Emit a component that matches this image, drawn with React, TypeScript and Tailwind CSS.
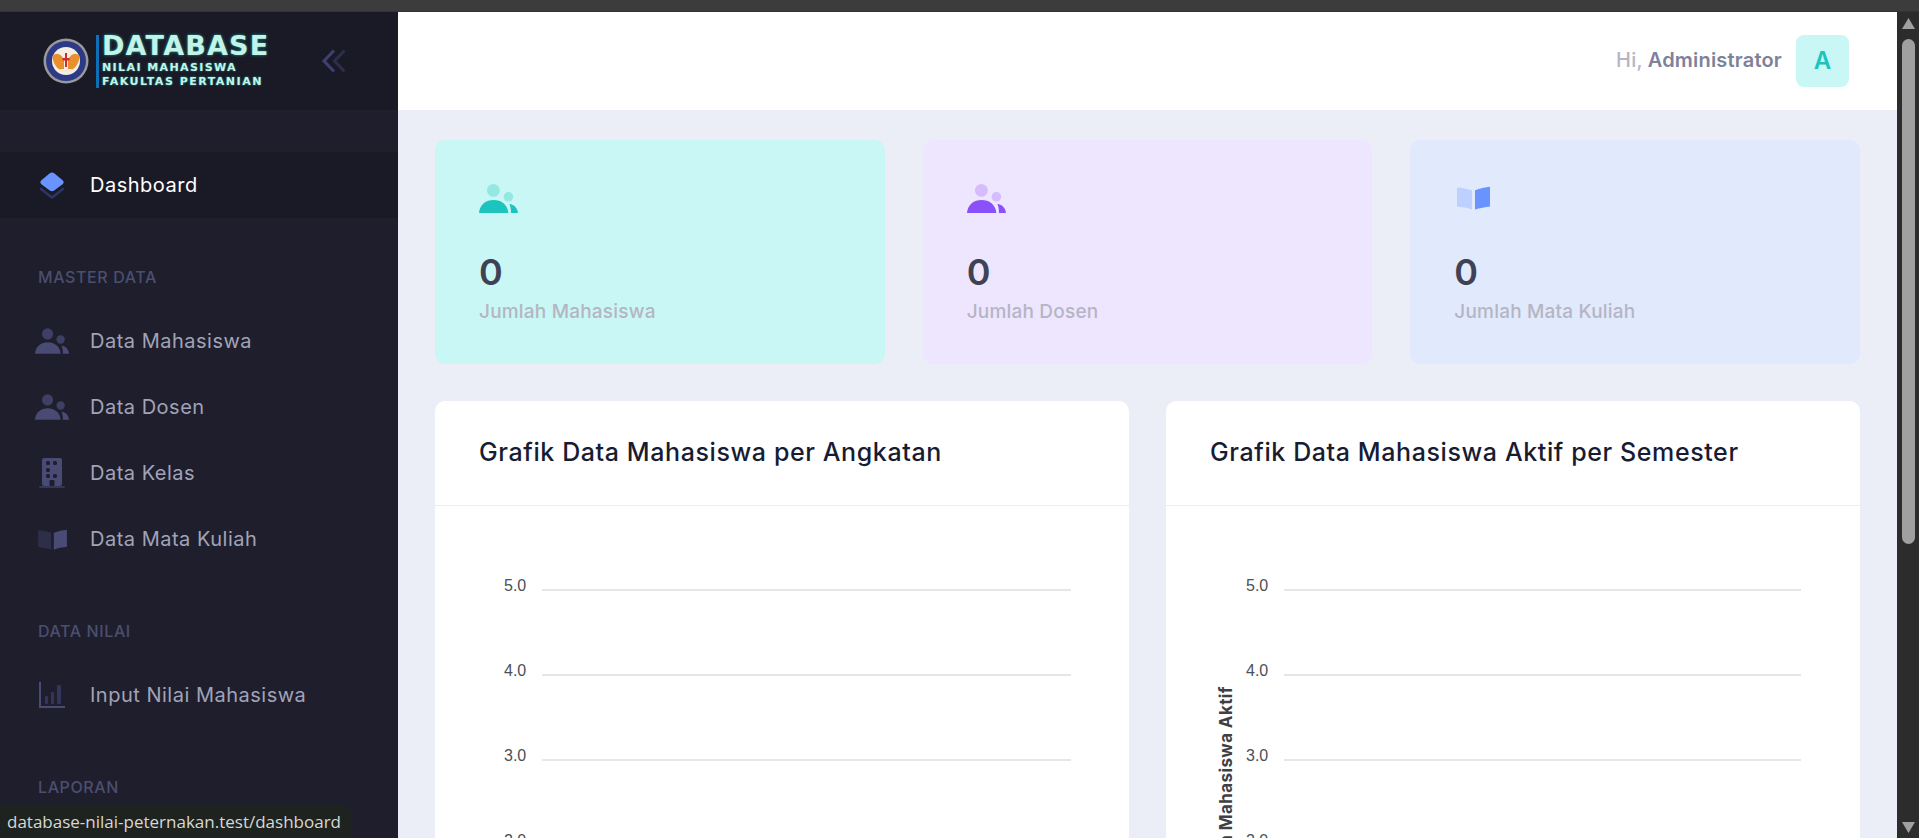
const navIcon = "h-[30px] w-[34px] shrink-0";

function PeopleIcon({ head, body, className }: { head: string; body: string; className: string }) {
  return (
    <svg viewBox="0 0 39 29" className={className}>
      <circle cx="14.4" cy="6.4" r="6.4" fill={head} />
      <circle cx="29.4" cy="12.8" r="4.8" fill={head} />
      <path d="M0 29C0.6 20.5 7 16 14.6 16C22.2 16 28.6 20.5 29.4 29Z" fill={body} />
      <path d="M30.4 20C35.4 20.6 38.6 24.2 39 29H32C32 25.6 31.6 22.6 30.4 20Z" fill={body} />
    </svg>
  );
}

function BookIcon({ left, right, className }: { left: string; right: string; className: string }) {
  return (
    <svg viewBox="0 0 33 24" className={className}>
      <path d="M0 1.5C5 1.8 10 2.8 15 4.2V23.5C10 22 5 21 0 20.6Z" fill={left} />
      <path d="M18 4.2C23 2.4 28 1.2 33 0.8V20.4C28 20.8 23 22 18 23.6Z" fill={right} />
    </svg>
  );
}

function BuildingIcon() {
  return (
    <svg viewBox="0 0 26 30" className={navIcon}>
      <rect x="3" y="0" width="20" height="28" rx="2" fill="#494b74" />
      <rect x="0" y="28" width="26" height="2" rx="1" fill="#33355a" />
      <g fill="#1e1e2d">
        <rect x="7" y="3" width="4" height="4" rx="1.5" />
        <rect x="14" y="3" width="4" height="4" rx="1.5" />
        <rect x="7" y="10" width="4" height="4" rx="1.5" />
        <rect x="7" y="16" width="4" height="4" rx="1.5" />
        <rect x="14" y="16" width="4" height="4" rx="1.5" />
        <rect x="10.5" y="22" width="5" height="6" rx="1" />
      </g>
    </svg>
  );
}

function ChartIcon() {
  return (
    <svg viewBox="0 0 26 26" className="ml-[4px] h-[26px] w-[26px] shrink-0">
      <path d="M1 0V25H26" fill="none" stroke="#494b74" strokeWidth="2" />
      <g fill="#33355a">
        <rect x="6" y="14" width="3" height="8" rx="1" />
        <rect x="12" y="10" width="3" height="12" rx="1" />
        <rect x="18" y="3" width="4" height="19" rx="1" />
      </g>
    </svg>
  );
}

function LayersIcon() {
  return (
    <svg viewBox="0 0 24 27" className="h-[27px] w-[24px] shrink-0">
      <path d="M9.8 1.2C11 0.2 13 0.2 14.2 1.2L22.6 8.2C24 9.4 24 11 22.6 12.2L14.2 18.6C13 19.6 11 19.6 9.8 18.6L1.4 12.2C0 11 0 9.4 1.4 8.2Z" fill="#6993ff" />
      <path d="M1 17L12 25.5L23 17" fill="none" stroke="#2c3665" strokeWidth="2.6" strokeLinecap="round" strokeLinejoin="round" />
    </svg>
  );
}

function Logo() {
  return (
    <div className="flex items-center">
      <svg viewBox="0 0 46 46" className="h-[46px] w-[46px] shrink-0">
        <circle cx="23" cy="23" r="22.5" fill="#9a9a9c" />
        <circle cx="23" cy="23" r="20" fill="#2e3a86" />
        <circle cx="23" cy="23" r="14" fill="#f3efe2" />
        <path d="M21 22C18 15 13 14 9.6 18C9.5 25 14 32 21 33ZM25 22C28 15 33 14 36.4 18C36.5 25 32 32 25 33Z" fill="#e8912c" />
        <path d="M22 15H24V20H26.5V22.5H24V29H22V22.5H19.5V20H22Z" fill="#cf2b2b" />
        <rect x="17" y="31" width="12" height="3" rx="1" fill="#f1ead8" />
      </svg>
      <div className="ml-[7px] h-[53px] w-[3px] bg-[#0d6fb8]" />
      <div className="ml-[3px] flex h-[53px] flex-col justify-between font-['DejaVu_Sans',sans-serif] font-bold text-[#c4f3e8]">
        <span className="text-[27px] leading-[21px] tracking-[1.2px] [text-shadow:0_0_3px_#19a89c]">DATABASE</span>
        <span className="mt-[4px] text-[11px] leading-[13px] tracking-[1.4px] [text-shadow:0_0_2px_#19a89c]">NILAI MAHASISWA</span>
        <span className="text-[11px] leading-[13px] tracking-[1.5px] [text-shadow:0_0_2px_#19a89c]">FAKULTAS PERTANIAN</span>
      </div>
    </div>
  );
}

function NavItem({ icon, label }: { icon: React.ReactNode; label: string }) {
  return (
    <div className="flex h-[66px] items-center pl-[35px]">
      <span className="flex w-[55px] shrink-0 items-center">{icon}</span>
      <span className="text-[20px] tracking-[0.5px] text-[#a2a3b7]">{label}</span>
    </div>
  );
}

function SectionLabel({ children, last }: { children: string; last?: boolean }) {
  return (
    <p className={`mt-[47px] pl-[38px] text-[16px] leading-[24px] font-medium tracking-[0.6px] text-[#4c4e6f] ${last ? "" : "mb-[19px]"}`}>
      {children}
    </p>
  );
}

function Sidebar() {
  return (
    <aside className="flex w-[398px] shrink-0 flex-col bg-[#1e1e2d]">
      <div className="flex h-[98px] shrink-0 items-center justify-between bg-[#1a1a27] pr-[52px] pl-[43px]">
        <Logo />
        <svg viewBox="0 0 24 24" className="h-[24px] w-[25px]" fill="none" strokeWidth="3">
          <path d="M23 1.5L13 12L23 22.5" stroke="#2d2e4a" />
          <path d="M12.5 1.5L2.5 12L12.5 22.5" stroke="#3f4070" />
        </svg>
      </div>
      <div className="pt-[42px]">
        <div className="flex h-[66px] items-center bg-[#1a1a27] pl-[40px]">
          <span className="flex w-[50px] shrink-0 items-center"><LayersIcon /></span>
          <span className="text-[20px] tracking-[0.5px] text-white">Dashboard</span>
        </div>
        <SectionLabel>MASTER DATA</SectionLabel>
        <NavItem icon={<PeopleIcon head="#3d3f63" body="#494b74" className={navIcon} />} label="Data Mahasiswa" />
        <NavItem icon={<PeopleIcon head="#3d3f63" body="#494b74" className={navIcon} />} label="Data Dosen" />
        <NavItem icon={<BuildingIcon />} label="Data Kelas" />
        <NavItem icon={<BookIcon left="#2d2e47" right="#494b74" className="ml-[3px] h-[21px] w-[29px] shrink-0" />} label="Data Mata Kuliah" />
        <SectionLabel>DATA NILAI</SectionLabel>
        <NavItem icon={<ChartIcon />} label="Input Nilai Mahasiswa" />
        <SectionLabel last>LAPORAN</SectionLabel>
      </div>
    </aside>
  );
}

function StatCard({ bg, icon, label }: { bg: string; icon: React.ReactNode; label: string }) {
  return (
    <div className={`h-[224px] rounded-[10px] px-[44px] pt-[44px] ${bg}`}>
      <div className="flex h-[29px] items-end">{icon}</div>
      <p className="mt-[39px] text-[36px] leading-[40px] font-semibold text-[#3f4254]">0</p>
      <p className="mt-[8px] text-[19px] leading-[24px] font-medium tracking-[0.2px] text-[#b5b5c3]">{label}</p>
    </div>
  );
}

function ChartCard({ title, yTitle, bodyClass }: { title: string; yTitle?: string; bodyClass: string }) {
  return (
    <div className="h-[600px] rounded-[10px] bg-white">
      <div className="flex h-[105px] items-center border-b border-[#ebedf3] pl-[44px]">
        <h3 className="text-[25px] font-medium tracking-[0.6px] text-[#181c32]">{title}</h3>
      </div>
      <div className={`relative pt-[71px] ${bodyClass}`}>
        {yTitle && (
          <span className="absolute top-[180px] left-[51px] rotate-180 text-[17px] leading-[18px] font-bold tracking-[0.4px] whitespace-nowrap text-[#3f3f46] [writing-mode:vertical-rl]">
            {yTitle}
          </span>
        )}
        {["5.0", "4.0", "3.0", "2.0"].map((tick) => (
          <div key={tick} className="relative h-[85px]">
            <span className="absolute top-[1px] -left-[38px] font-['Liberation_Sans',sans-serif] text-[16px] leading-[16px] text-[#4b5057]">
              {tick}
            </span>
            <div className="h-[2px] translate-y-[12px] bg-[#e5e6e9]" />
          </div>
        ))}
      </div>
    </div>
  );
}

function Scrollbar() {
  return (
    <div className="flex w-[22px] shrink-0 flex-col items-center bg-[#2c2c2c] pt-[6px]">
      <svg viewBox="0 0 13 11" className="h-[11px] w-[13px]"><path d="M6.5 0L13 11H0Z" fill="#a0a0a0" /></svg>
      <div className="mt-[10px] h-[505px] w-[13px] rounded-full bg-[#a0a0a0]" />
      <svg viewBox="0 0 13 11" className="mt-auto mb-[5px] h-[11px] w-[13px]"><path d="M0 0H13L6.5 11Z" fill="#a0a0a0" /></svg>
    </div>
  );
}

export default function App() {
  return (
    <div className="relative flex h-[838px] flex-col overflow-hidden bg-[#eceef7] font-[Inter,sans-serif]">
      <div className="h-[12px] shrink-0 border-b border-[#333333] bg-[#3c3c3c]" />
      <div className="flex min-h-0 flex-1">
        <Sidebar />
        <main className="min-w-0 flex-1 overflow-hidden">
          <header className="flex h-[98px] items-center justify-end bg-white pr-[48px]">
            <span className="-translate-y-[1px] text-[20px] font-medium tracking-[0.2px] text-[#b5b5c3]">Hi,</span>
            <span className="ml-[5px] -translate-y-[1px] text-[20px] font-semibold tracking-[0.2px] text-[#7e8299]">Administrator</span>
            <span className="ml-[14px] flex h-[52px] w-[53px] items-center justify-center rounded-[8px] bg-[#c9f7f5] text-[24px] font-semibold text-[#1bc5bd]">
              A
            </span>
          </header>
          <div className="px-[37px] pt-[30px]">
            <div className="grid grid-cols-3 gap-[38px]">
              <StatCard bg="bg-[#c9f7f5]" label="Jumlah Mahasiswa" icon={<PeopleIcon head="#95e8e2" body="#1bc5bd" className="h-[29px] w-[39px]" />} />
              <StatCard bg="bg-[#eee5ff]" label="Jumlah Dosen" icon={<PeopleIcon head="#d4bcfd" body="#8950fc" className="h-[29px] w-[39px]" />} />
              <StatCard bg="bg-[#e1e9fd]" label="Jumlah Mata Kuliah" icon={<BookIcon left="#bdd0ff" right="#6993ff" className="mb-[3px] ml-[3px] h-[24px] w-[33px]" />} />
            </div>
            <div className="mt-[37px] grid grid-cols-2 gap-[37px]">
              <ChartCard title="Grafik Data Mahasiswa per Angkatan" bodyClass="pr-[58px] pl-[107px]" />
              <ChartCard title="Grafik Data Mahasiswa Aktif per Semester" yTitle="Jumlah Mahasiswa Aktif" bodyClass="pr-[59px] pl-[118px]" />
            </div>
          </div>
        </main>
        <Scrollbar />
      </div>
      <div className="absolute bottom-0 left-0 flex h-[32px] w-[351px] items-center rounded-tr-[6px] bg-[#1f2320] pl-[7px] font-['Open_Sans',sans-serif] text-[17px] whitespace-nowrap text-[#d5d8d5]">
        database-nilai-peternakan.test/dashboard
      </div>
    </div>
  );
}
